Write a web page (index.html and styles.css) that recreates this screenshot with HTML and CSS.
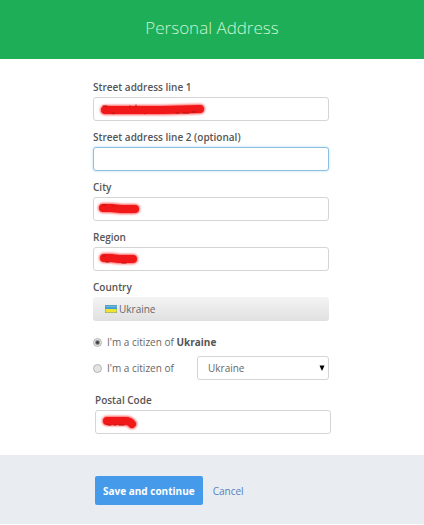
FILE: index.html
```html
<!DOCTYPE html>
<html lang="en">
<head>
<meta charset="utf-8">
<meta name="viewport" content="width=device-width, initial-scale=1">
<title>Personal Address</title>
<link rel="stylesheet" href="styles.css">
</head>
<body>
<header class="banner"><h1>Personal Address</h1></header>
<form class="form">
  <main class="content">
    <div class="column">
      <div class="group">
        <div class="field">
          <label for="street1">Street address line 1</label>
          <div class="control">
            <input class="box" type="text" id="street1">
            <svg class="mark" width="120" height="24" viewBox="0 0 120 24" aria-hidden="true">
              <path class="halo" d="M12 13 L70 13 L107 12"/>
              <path class="ink" d="M12 13 L70 13 L107 12"/>
              <path class="trace" d="M10 9h4M19 16q2 2 3 0M37 9v1M43 8v1M53 16l-1 1M83 16h3M90 16h6M99 15h4"/>
            </svg>
          </div>
        </div>
        <div class="field">
          <label for="street2">Street address line 2 (optional)</label>
          <input class="box active" type="text" id="street2">
        </div>
        <div class="field">
          <label for="city">City</label>
          <div class="control">
            <input class="box" type="text" id="city">
            <svg class="mark" width="120" height="24" viewBox="0 0 120 24" aria-hidden="true">
              <path class="halo" d="M10 11 L18 11 L28 12 L42 12"/>
              <path class="ink" d="M10 11 L18 11 L28 12 L42 12"/>
              <path class="trace" d="M10 8h3M20 9h1"/>
            </svg>
          </div>
        </div>
        <div class="field">
          <label for="region">Region</label>
          <div class="control">
            <input class="box" type="text" id="region">
            <svg class="mark" width="120" height="24" viewBox="0 0 120 24" aria-hidden="true">
              <path class="halo" d="M11 11 L18 11 L26 12 L40 12"/>
              <path class="ink" d="M11 11 L18 11 L26 12 L40 12"/>
              <path class="trace" d="M10 9h2M13 15h3M29 16h4"/>
            </svg>
          </div>
        </div>
        <div class="field">
          <label for="country">Country</label>
          <button class="country" type="button" id="country">
            <svg width="12" height="8" viewBox="0 0 12 8" aria-hidden="true">
              <rect width="12" height="8" fill="#6d9a9c"/>
              <rect x="0.5" y="0.5" width="11" height="3.5" fill="#3f9fd6"/>
              <rect x="0.5" y="4" width="11" height="3.5" fill="#efe52c"/>
              <rect x="0.5" y="1" width="11" height="1" fill="#6dbbe2"/>
            </svg>
            <span>Ukraine</span>
          </button>
        </div>
        <div class="choice first">
          <input type="radio" name="citizen" id="same" checked>
          <label for="same">I'm a citizen of <strong>Ukraine</strong></label>
        </div>
        <div class="choice">
          <input type="radio" name="citizen" id="other">
          <label for="other">I'm a citizen of</label>
          <div class="picker">
            <select class="box" aria-label="Citizenship"><option>Ukraine</option></select>
            <svg class="arrow" width="6" height="6" viewBox="0 0 6 6" aria-hidden="true"><path d="M0.5 0.5h5L3 6z"/></svg>
          </div>
        </div>
      </div>
      <div class="field postal">
        <label for="postal">Postal Code</label>
        <div class="control">
          <input class="box" type="text" id="postal">
          <svg class="mark" width="120" height="24" viewBox="0 0 120 24" aria-hidden="true">
            <path class="halo" d="M12 11 L30 11 Q35 11 37 14"/>
            <path class="ink" d="M12 11 L30 11 Q35 11 37 14"/>
            <path class="trace" d="M13 15h3M19 15h2M24 15h5"/>
          </svg>
        </div>
      </div>
    </div>
  </main>
  <footer class="footer">
    <div class="column actions">
      <button class="save" type="submit">Save and continue</button>
      <a class="cancel" href="#">Cancel</a>
    </div>
  </footer>
</form>
</body>
</html>
```
FILE: styles.css
```css
* { box-sizing: border-box; }

body {
  margin: 0;
  background: #fff;
  color: #666;
  font: 10px/20px "Open Sans", sans-serif;
}

input, select, button { font: inherit; color: inherit; margin: 0; }

.banner {
  background: #1fae58;
  padding: 14px 16px 18px;
  text-align: center;
}

.banner h1 {
  margin: 0;
  color: #c9f5d3;
  font-size: 17px;
  font-weight: 300;
  line-height: 27px;
}

.column {
  width: 100%;
  max-width: 238px;
  margin: 0 auto;
}

.content { padding: 18px 16px 21px; }

.group { padding-right: 2px; }

.field { margin-bottom: 6px; }

.field > label {
  display: block;
  color: #555;
  font-weight: 600;
}

.control, .picker { position: relative; }

.box {
  display: block;
  width: 100%;
  height: 24px;
  padding: 0 10px;
  border: 1px solid #d5d5d5;
  border-radius: 3px;
  background: #fff;
  outline: none;
}

.box.active, .box:focus {
  border-color: #8dbfe0;
  box-shadow: 0 0 3px #b5def5;
}

.mark {
  position: absolute;
  left: 0;
  top: 0;
  pointer-events: none;
  fill: none;
  stroke-linecap: round;
  stroke-linejoin: round;
}

.halo { stroke: #ff5a5a; stroke-width: 10px; filter: blur(1px); }
.ink { stroke: #f01818; stroke-width: 8px; }
.trace { stroke: #b51212; stroke-width: 1px; }

.country {
  display: flex;
  align-items: center;
  gap: 2px;
  width: 100%;
  height: 24px;
  padding: 0 12px;
  border: 0;
  border-radius: 3px;
  background: linear-gradient(#f4f4f4, #e0e0e0);
}

.choice {
  display: flex;
  align-items: center;
  height: 24px;
}

.choice.first { margin: 9px 0 2px; }

.choice input {
  appearance: none;
  width: 9px;
  height: 9px;
  margin-right: 5px;
  border: 1px solid #b5b5b5;
  border-radius: 50%;
  background: #e4e4e4;
}

.choice input:checked {
  background: radial-gradient(circle, #444 0 1px, #e4e4e4 3px);
}

.choice strong { color: #555; font-weight: 700; }

.picker {
  width: 132px;
  margin-left: auto;
}

.picker select { appearance: none; }

.arrow {
  position: absolute;
  right: 4px;
  top: 9px;
  pointer-events: none;
}

.postal { margin: 10px 0 0; padding-left: 2px; }

.footer {
  padding: 21px 16px 19px;
  background: #e9edf1;
}

.actions {
  display: flex;
  align-items: center;
  gap: 10px;
  padding-left: 2px;
}

.save {
  height: 29px;
  padding: 0 8px;
  border: 0;
  border-radius: 2px;
  background: #459bea;
  color: #fff;
  font-weight: 700;
}

.cancel { color: #5580bd; text-decoration: none; }
```
